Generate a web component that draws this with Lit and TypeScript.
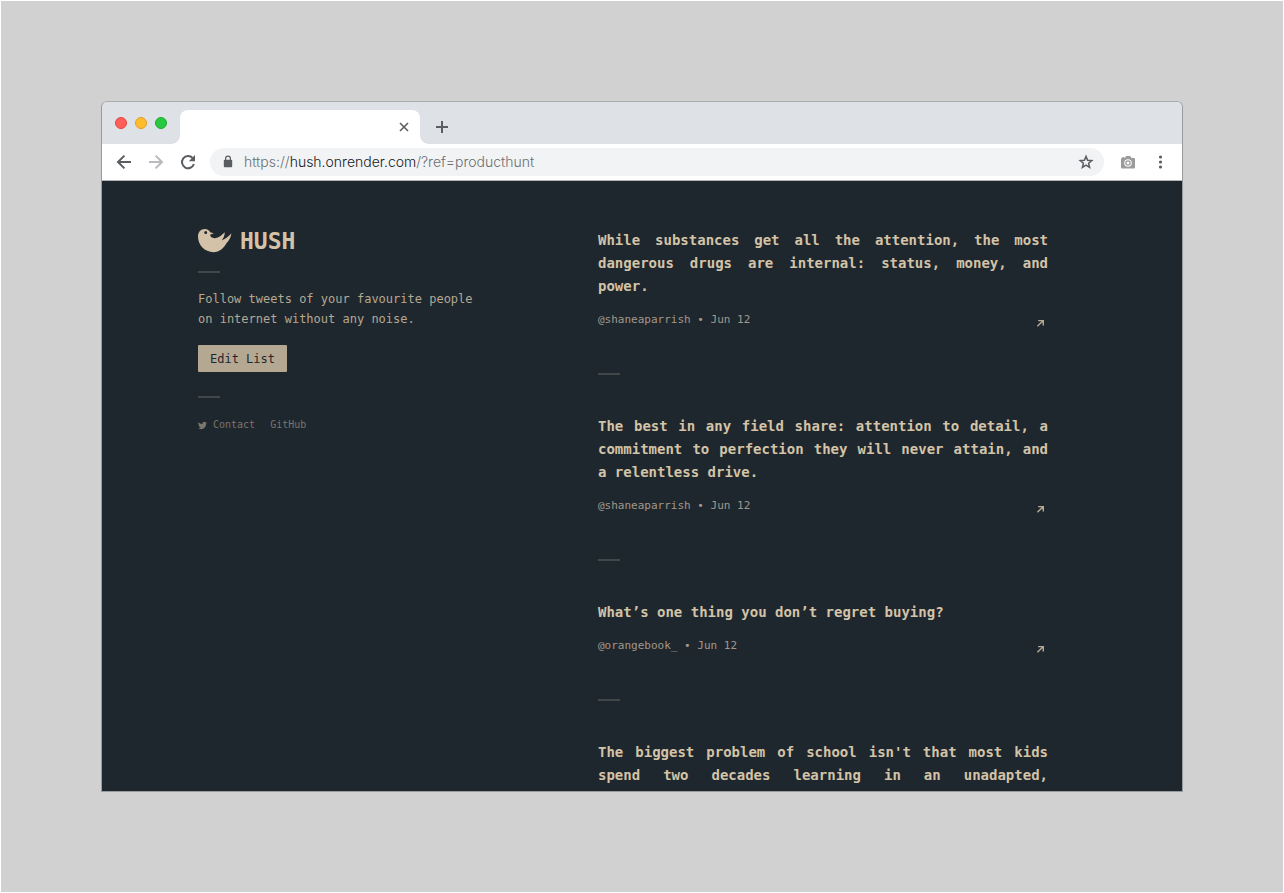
import { LitElement, html, css, svg } from "lit";
import { customElement } from "lit/decorators.js";
import { classMap } from "lit/directives/class-map.js";

interface Tweet {
  text: string;
  handle: string;
  date: string;
}

const tweets: Tweet[] = [
  {
    text: "While substances get all the attention, the most dangerous drugs are internal: status, money, and power.",
    handle: "@shaneaparrish",
    date: "Jun 12",
  },
  {
    text: "The best in any field share: attention to detail, a commitment to perfection they will never attain, and a relentless drive.",
    handle: "@shaneaparrish",
    date: "Jun 12",
  },
  {
    text: "What’s one thing you don’t regret buying?",
    handle: "@orangebook_",
    date: "Jun 12",
  },
  {
    text: "The biggest problem of school isn't that most kids spend two decades learning in an unadapted,",
    handle: "",
    date: "",
  },
];

const stroke = (d: string, width = 2) =>
  svg`<path d=${d} fill="none" stroke="currentColor" stroke-width=${width} />`;

@customElement("hush-tweet")
class HushTweet extends LitElement {
  static properties = { tweet: { attribute: false } };
  declare tweet: Tweet;

  static styles = css`
    :host {
      display: block;
    }
    .text {
      margin: 0 0 8px;
      font-size: 14px;
      line-height: 23px;
      font-weight: 700;
      text-align: justify;
      color: #d3c3a7;
    }
    .text.partial {
      text-align-last: justify;
    }
    .meta {
      display: flex;
      justify-content: space-between;
      align-items: flex-end;
      height: 26px;
      font-size: 11px;
      line-height: 24px;
      color: #a2988a;
    }
    .open {
      display: flex;
      align-items: center;
      justify-content: center;
      width: 16px;
      height: 18px;
      color: #b9ab93;
    }
    .rule {
      width: 22px;
      height: 2px;
      margin: 41px 0 40px;
      border: 0;
      background: #424749;
    }
  `;

  render() {
    const { text, handle, date } = this.tweet;
    return html`
      <article>
        <p class=${classMap({ text: true, partial: !handle })}>${text}</p>
        ${handle
          ? html`<div class="meta">
                <span>${handle} • ${date}</span>
                <a class="open" href="#" aria-label="Open tweet">
                  <svg width="8" height="8" viewBox="0 0 8 8">
                    ${stroke("M2.2 1.6H7.3V6.6M7.3 1.6L1.4 7.2", 1.4)}
                  </svg>
                </a>
              </div>
              <hr class="rule" />`
          : ""}
      </article>
    `;
  }
}

@customElement("hush-page")
class HushPage extends LitElement {
  static styles = css`
    :host {
      display: grid;
      grid-template-columns: 400px minmax(0, 450px);
      align-content: start;
      padding: 48px 96px 0;
      overflow: hidden;
      background: #1f272e;
      font-family: "DejaVu Sans Mono", monospace;
    }
    .brand {
      display: flex;
      align-items: center;
      gap: 8px;
      height: 24px;
      color: #d4c2a8;
    }
    .name {
      margin: 0;
      font-size: 23px;
      line-height: 24px;
      font-weight: 700;
    }
    .rule {
      width: 22px;
      height: 2px;
      margin: 18px 0 16px;
      border: 0;
      background: #424749;
    }
    .lead {
      max-width: 280px;
      margin: 0 0 16px;
      font-size: 12px;
      line-height: 20px;
      color: #b5a892;
    }
    .edit {
      display: block;
      margin: 0 0 24px;
      padding: 1px 12px 0;
      border: 0;
      border-radius: 1px;
      background: #b5a892;
      color: #1f272e;
      font: 12px/26px "DejaVu Sans Mono", monospace;
    }
    .links {
      display: flex;
      gap: 15px;
      font-size: 10px;
      line-height: 22px;
    }
    .links a {
      display: flex;
      align-items: center;
      gap: 6px;
      color: #7a756d;
      text-decoration: none;
    }
  `;

  render() {
    return html`
      <aside>
        <div class="brand">
          <svg width="34" height="24" viewBox="0 0 34 24" fill="currentColor">
            <path
              fill-rule="evenodd"
              d="M0 7.6C0 3 2.8 0 6.8 0C9.4 0 11.4 1.3 12.3 3.3L15.9 4.6L12.2 5.6C12.2 8 14 9.4 17 9.2C21 8.8 23.6 6 26.8 3.2C26.7 6.4 25.6 9 23.8 11.4C27.6 9.8 30.6 7.4 33.4 4.2C32.8 8.8 30.8 11.6 28.6 14C26 19 21.5 23.2 15.5 23.2C6.5 23.2 0 16 0 7.6ZM9.2 3.6A1.5 1.5 0 1 0 6.2 3.6A1.5 1.5 0 1 0 9.2 3.6Z"
            />
          </svg>
          <h1 class="name">HUSH</h1>
        </div>
        <hr class="rule" />
        <p class="lead">Follow tweets of your favourite people on internet without any noise.</p>
        <button class="edit" type="button">Edit List</button>
        <hr class="rule" />
        <nav class="links">
          <a href="#">
            <svg width="9" height="9" viewBox="0 0 24 24" fill="currentColor">
              <path
                d="M23.95 4.57a10 10 0 0 1-2.82.77 4.96 4.96 0 0 0 2.16-2.72c-.95.55-2 .96-3.13 1.19a4.92 4.92 0 0 0-8.38 4.48C7.69 8.1 4.07 6.13 1.64 3.16a4.92 4.92 0 0 0 1.52 6.57 4.9 4.9 0 0 1-2.23-.61v.06c0 2.38 1.7 4.37 3.95 4.82a5 5 0 0 1-2.21.09 4.94 4.94 0 0 0 4.6 3.42A9.87 9.87 0 0 1 0 19.54a13.99 13.99 0 0 0 7.56 2.21c9.05 0 14-7.5 14-13.98 0-.21 0-.42-.02-.63a9.94 9.94 0 0 0 2.41-2.57z"
              />
            </svg>
            Contact
          </a>
          <a href="#">GitHub</a>
        </nav>
      </aside>
      <main>${tweets.map((t) => html`<hush-tweet .tweet=${t}></hush-tweet>`)}</main>
    `;
  }
}

@customElement("app-root")
class AppRoot extends LitElement {
  static styles = css`
    :host {
      display: flex;
      box-sizing: border-box;
      height: 100vh;
      padding: 100px;
      border: 1px solid #fff;
      background: #d1d1d1;
    }
    .window {
      flex: 1;
      min-width: 0;
      display: flex;
      flex-direction: column;
      overflow: hidden;
      border: 1px solid #999c9e;
      border-top-color: #a9abad;
      border-radius: 6px 6px 0 0;
    }
    .tabs {
      display: flex;
      align-items: flex-end;
      height: 42px;
      flex: none;
      background: #dee1e6;
      color: #5a5d61;
    }
    .lights {
      display: flex;
      align-self: center;
      gap: 8px;
      width: 65px;
      padding-left: 13px;
    }
    .light {
      box-sizing: border-box;
      width: 12px;
      height: 12px;
      border-radius: 50%;
      background: #ff5f57;
      border: 1px solid #e2463f;
    }
    .light.min {
      background: #ffbd2e;
      border-color: #dfa023;
    }
    .light.max {
      background: #28c940;
      border-color: #1bac2c;
    }
    .tab {
      position: relative;
      display: flex;
      align-items: center;
      justify-content: flex-end;
      box-sizing: border-box;
      width: 240px;
      height: 34px;
      padding-right: 8px;
      border-radius: 8px 8px 0 0;
      background: #fff;
    }
    .tab::before,
    .tab::after {
      content: "";
      position: absolute;
      bottom: 0;
      width: 8px;
      height: 8px;
    }
    .tab::before {
      right: 100%;
      background: radial-gradient(circle at 0 0, transparent 7.5px, #fff 8px);
    }
    .tab::after {
      left: 100%;
      background: radial-gradient(circle at 100% 0, transparent 7.5px, #fff 8px);
    }
    button {
      display: flex;
      padding: 0;
      border: 0;
      background: none;
      color: inherit;
    }
    .add {
      margin: 0 0 9px 14px;
    }
    .bar {
      display: flex;
      align-items: center;
      gap: 16px;
      height: 36px;
      flex: none;
      padding: 0 14px;
      border-bottom: 1px solid #b3b5b8;
      background: #fff;
      color: #5a5d61;
    }
    .dim {
      color: #b8babd;
    }
    .address {
      flex: 1;
      min-width: 0;
      display: flex;
      align-items: center;
      gap: 8px;
      height: 28px;
      margin: 0 0 0 -2px;
      padding: 0 10px;
      border-radius: 14px;
      background: #f1f3f4;
    }
    .url {
      flex: 1;
      font: 300 14px/20px Inter, sans-serif;
      color: #6b6f73;
      text-decoration: none;
    }
    .host {
      color: #17191c;
    }
    .cam {
      color: #9b9b9b;
    }
    hush-page {
      flex: 1;
      min-height: 0;
    }
  `;

  render() {
    return html`
      <div class="window">
        <div class="tabs">
          <div class="lights">
            <span class="light"></span>
            <span class="light min"></span>
            <span class="light max"></span>
          </div>
          <div class="tab">
            <button type="button" aria-label="Close tab">
              <svg width="16" height="16">${stroke("M4 4L12 12M12 4L4 12", 1.6)}</svg>
            </button>
          </div>
          <button class="add" type="button" aria-label="New tab">
            <svg width="16" height="16">${stroke("M8 2V14M2 8H14", 2)}</svg>
          </button>
        </div>
        <div class="bar">
          <button type="button" aria-label="Back">
            <svg width="16" height="16">${stroke("M15 8H2.4M8.4 1.6L2 8L8.4 14.4", 2)}</svg>
          </button>
          <button class="dim" type="button" aria-label="Forward">
            <svg width="16" height="16">${stroke("M1 8H13.6M7.6 1.6L14 8L7.6 14.4", 2)}</svg>
          </button>
          <button type="button" aria-label="Reload">
            <svg width="16" height="16">
              ${stroke("M13.9 10A6.1 6.1 0 1 1 12.6 4", 2)}
              <path d="M15 1V7.2H8.8Z" fill="currentColor" />
            </svg>
          </button>
          <div class="address">
            <svg width="16" height="16">
              <rect x="3.8" y="5.8" width="8.4" height="7.4" rx="1" fill="currentColor" />
              ${stroke("M5.6 6.5V4.6A2.4 2.4 0 0 1 10.4 4.6V6.5", 1.2)}
            </svg>
            <a class="url" href="#">https://<span class="host">hush.onrender.com</span>/?ref=producthunt</a>
            <button type="button" aria-label="Bookmark">
              <svg width="16" height="16">
                ${stroke("M8 2.4L9.6 6.2L13.8 6.6L10.6 9.3L11.6 13.4L8 11.2L4.4 13.4L5.4 9.3L2.2 6.6L6.4 6.2Z", 1.5)}
              </svg>
            </button>
          </div>
          <button class="cam" type="button" aria-label="Capture">
            <svg width="16" height="16" fill="currentColor">
              <path
                fill-rule="evenodd"
                d="M1 5.2Q1 4 2 4H2.4V3H4.4V4H5L6 2H10.2L11.4 4H14Q15 4 15 5.2V13.2Q15 14.4 14 14.4H2Q1 14.4 1 13.2ZM11.8 9A3.8 3.8 0 1 0 4.2 9A3.8 3.8 0 1 0 11.8 9Z"
              />
              <path
                fill-rule="evenodd"
                d="M10.8 9A2.8 2.8 0 1 0 5.2 9A2.8 2.8 0 1 0 10.8 9ZM9.5 9A1.5 1.5 0 1 1 6.5 9A1.5 1.5 0 1 1 9.5 9Z"
              />
            </svg>
          </button>
          <button type="button" aria-label="Menu">
            <svg width="16" height="16" fill="currentColor">
              <circle cx="8.5" cy="3" r="1.6" />
              <circle cx="8.5" cy="8" r="1.6" />
              <circle cx="8.5" cy="13" r="1.6" />
            </svg>
          </button>
        </div>
        <hush-page></hush-page>
      </div>
    `;
  }
}
